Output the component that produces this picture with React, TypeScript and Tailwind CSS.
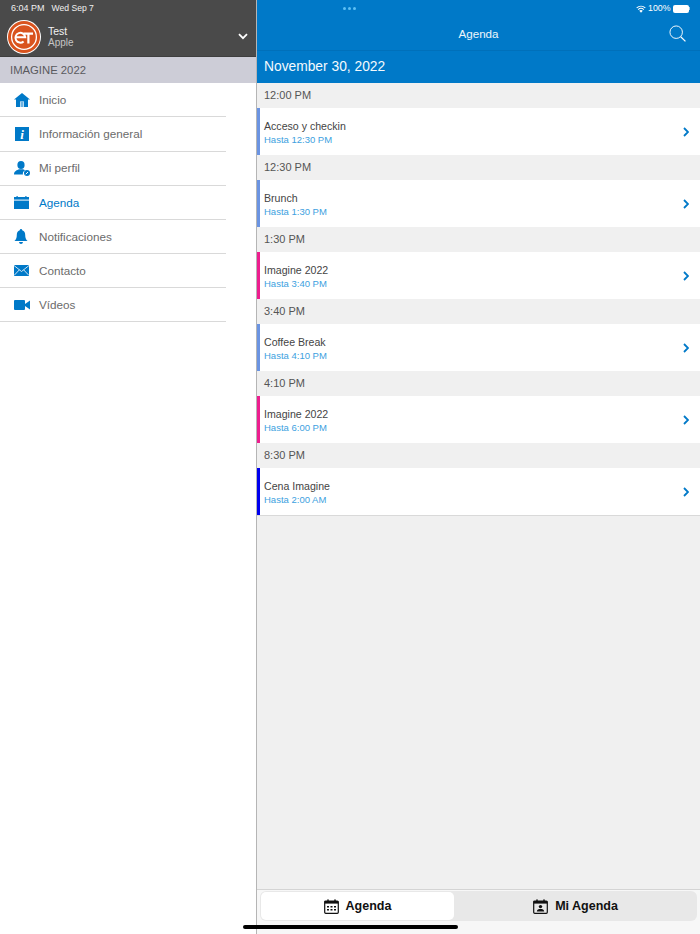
import React from 'react';

const font = "font-['Liberation_Sans',Arial,sans-serif]";

const HomeIcon = () => (
  <svg viewBox="0 0 16 14" className="w-[16px] h-[14px]">
    <path d="M8 0 L16 6.5 L14 6.5 L14 14 L10 14 L10 8.5 L6 8.5 L6 14 L2 14 L2 6.5 L0 6.5 Z" fill="#0079c8" />
    <rect x="6.5" y="9" width="3" height="5" fill="#6fb4e2" />
  </svg>
);

const InfoIcon = () => (
  <div className="w-[14px] h-[14px] ml-px bg-[#0079c8] flex items-center justify-center text-white text-[13px] font-bold italic leading-none font-['Liberation_Serif',serif]">
    i
  </div>
);

const ProfileIcon = () => (
  <svg viewBox="0 0 16 15" className="w-[16px] h-[15px]">
    <ellipse cx="7" cy="4" rx="3.6" ry="4" fill="#0079c8" />
    <path d="M0 13.5 C0 10 3 9 5.2 8.2 L8.8 8.2 C10 8.6 10.8 9 11 9.4 C9 10.4 8.6 12 9 13.5 Z" fill="#0079c8" />
    <circle cx="13" cy="12" r="3" fill="#0079c8" />
    <path d="M11.8 13.2 L14 11" stroke="#fff" strokeWidth="1" />
  </svg>
);

const CalendarIcon = () => (
  <svg viewBox="0 0 15 13" className="w-[15px] h-[13px]">
    <rect x="0" y="1" width="15" height="2.6" fill="#0079c8" />
    <rect x="0" y="4.6" width="15" height="8.4" fill="#0079c8" />
    <rect x="2.5" y="0" width="1.2" height="2" fill="#0079c8" />
    <rect x="11.3" y="0" width="1.2" height="2" fill="#0079c8" />
  </svg>
);

const BellIcon = () => (
  <svg viewBox="0 0 14 15" className="w-[14px] h-[15px]">
    <path d="M7 0 C7.8 0 8.2 .6 8.2 1.3 C10.4 2 11.2 3.8 11.2 6 C11.2 9 12 10.6 13.6 12 L.4 12 C2 10.6 2.8 9 2.8 6 C2.8 3.8 3.6 2 5.8 1.3 C5.8 .6 6.2 0 7 0 Z" fill="#0079c8" />
    <path d="M5 13 L9 13 C8.8 14.2 8 15 7 15 C6 15 5.2 14.2 5 13 Z" fill="#0079c8" />
  </svg>
);

const MailIcon = () => (
  <svg viewBox="0 0 15 11" className="w-[15px] h-[11px]">
    <rect width="15" height="11" fill="#0079c8" />
    <path d="M0 .5 L7.5 6.5 L15 .5 M0 10.5 L5.4 4.8 M15 10.5 L9.6 4.8" stroke="#fff" strokeWidth=".8" fill="none" />
  </svg>
);

const VideoIcon = () => (
  <svg viewBox="0 0 16 10" className="w-[16px] h-[10px]">
    <rect width="11" height="10" rx="1" fill="#0079c8" />
    <path d="M11 4 L16 0.5 L16 9.5 L11 6 Z" fill="#0079c8" />
  </svg>
);

const Logo = () => (
  <div className="w-[34px] h-[34px] rounded-full bg-white flex items-center justify-center shrink-0">
    <svg viewBox="0 0 32 32" className="w-[32px] h-[32px]">
      <circle cx="16" cy="16" r="16" fill="#d9531e" />
      <circle cx="16" cy="16" r="12.4" fill="none" stroke="#fff" strokeWidth="1.3" />
      <path d="M7.6 16.2 L17.2 16.2 A4.9 4.9 0 1 0 15.6 20.4" fill="none" stroke="#fff" strokeWidth="2" />
      <path d="M15.5 12.6 L25 12.6 M20.4 12.6 L20.4 22.6" fill="none" stroke="#fff" strokeWidth="2.2" />
    </svg>
  </div>
);

const MenuRow: React.FC<{ label: string; icon: React.ReactNode; active?: boolean }> = ({ label, icon, active }) => (
  <div className="h-[34.15px] w-[226px] border-b border-[#d9d9d9] flex items-center">
    <div className="w-[39px] pl-[14px] flex items-center shrink-0">{icon}</div>
    <span className={`text-[11.7px] ${active ? 'text-[#0079c8]' : 'text-[#6b6b6b]'}`}>{label}</span>
  </div>
);

const Sidebar = () => (
  <div className="w-[257px] shrink-0 border-r border-[#b5b5b5] bg-white flex flex-col">
    <div className="h-[57px] bg-[#4a4a4a] border-b border-[#3e3e3e] text-white flex flex-col">
      <div className="h-[18px] pl-[11px] pt-[3px] leading-[11px] text-[#f0f0f0] flex gap-[7px]">
        <span className="text-[9px]">6:04 PM</span>
        <span className="text-[8.6px]">Wed Sep 7</span>
      </div>
      <div className="flex items-center pl-[7px] pr-[7px] h-[37px]">
        <Logo />
        <div className="ml-[7px] flex-1 leading-none pt-[1px]">
          <div className="text-[10.5px] leading-[11px] text-[#f2f2f2]">Test</div>
          <div className="text-[10px] leading-[11px] text-[#c6c6c6]">Apple</div>
        </div>
        <svg viewBox="0 0 10 7" className="w-[10px] h-[7px] mr-[1px]">
          <path d="M1 1.2 L5 5.2 L9 1.2" fill="none" stroke="#fff" strokeWidth="1.8" />
        </svg>
      </div>
    </div>
    <div className="h-[26px] bg-[#cdcdd7] pl-[10px] flex items-center text-[11.3px] text-[#5a5a5e]">IMAGINE 2022</div>
    <div className="mt-[0.3px] flex flex-col">
      <MenuRow label="Inicio" icon={<HomeIcon />} />
      <MenuRow label="Información general" icon={<InfoIcon />} />
      <MenuRow label="Mi perfil" icon={<ProfileIcon />} />
      <MenuRow label="Agenda" icon={<CalendarIcon />} active />
      <MenuRow label="Notificaciones" icon={<BellIcon />} />
      <MenuRow label="Contacto" icon={<MailIcon />} />
      <MenuRow label="Vídeos" icon={<VideoIcon />} />
    </div>
  </div>
);

const TopBar = () => (
  <div className="bg-[#0079c8] text-white">
    <div className="h-[51px] border-b border-[#0070ba] flex flex-col">
      <div className="h-[17px] relative flex items-center justify-end pr-[10px] text-[8.8px]">
        <div className="absolute left-[86px] top-[7px] flex gap-[2px]">
          <div className="w-[3px] h-[3px] rounded-full bg-[#5ec0f5]" />
          <div className="w-[3px] h-[3px] rounded-full bg-[#5ec0f5]" />
          <div className="w-[3px] h-[3px] rounded-full bg-[#5ec0f5]" />
        </div>
        <svg viewBox="0 0 12 9" className="w-[10px] h-[8px] mr-[2px]">
          <path d="M6 9 L3.9 6.6 C5.1 5.5 6.9 5.5 8.1 6.6 Z" fill="#fff" />
          <path d="M2.6 5.2 C4.6 3.4 7.4 3.4 9.4 5.2 M.8 3.1 C3.8 .5 8.2 .5 11.2 3.1" fill="none" stroke="#fff" strokeWidth="1.3" />
        </svg>
        <span className="mr-[2px]">100%</span>
        <div className="w-[16px] h-[8px] rounded-[2px] bg-white" />
        <div className="w-[1px] h-[3px] bg-[#9cc9e8] ml-[0.5px]" />
      </div>
      <div className="flex-1 relative flex items-center justify-center text-[11.6px]">
        <span className="text-[#eef6fb]">Agenda</span>
        <svg viewBox="0 0 18 18" className="absolute right-[14px] top-[8px] w-[17px] h-[17px]">
          <circle cx="7.6" cy="7.6" r="6.6" fill="none" stroke="#fff" strokeWidth="1" />
          <path d="M12.4 12.4 L17.4 17.4" stroke="#fff" strokeWidth="1.3" />
        </svg>
      </div>
    </div>
    <div className="h-[32px] pl-[7px] pt-px flex items-center text-[13.8px] text-[#f4f9fd]">November 30, 2022</div>
  </div>
);

const AgendaItem: React.FC<{ time: string; title: string; until: string; color: string; last?: boolean }> = ({ time, title, until, color, last }) => (
  <div>
    <div className="h-[25px] pl-[7px] pb-[1px] flex items-center text-[11px] text-[#555555]">{time}</div>
    <div className={`bg-white flex items-stretch ${last ? 'h-[48px] border-b border-[#d9d9d9]' : 'h-[47px]'}`}>
      <div className={`w-[3px] shrink-0 ${color}`} />
      <div className="flex-1 pl-[4px] pt-[1px] flex flex-col justify-center">
        <div className="text-[10.6px] leading-[14px] text-[#444444]">{title}</div>
        <div className="text-[9.5px] leading-[13px] text-[#3d9fe0]">{until}</div>
      </div>
      <div className="w-[17px] shrink-0 flex items-center">
        <svg viewBox="0 0 6 10" className="w-[6px] h-[10px]">
          <path d="M1 1 L5 5 L1 9" fill="none" stroke="#0079c8" strokeWidth="1.8" />
        </svg>
      </div>
    </div>
  </div>
);

const TabCalendarIcon: React.FC<{ person?: boolean }> = ({ person }) => (
  <svg viewBox="0 0 15 15" className="w-[15px] h-[15px]">
    <rect x="0.7" y="2" width="13.6" height="12.3" rx="1" fill="none" stroke="#111" strokeWidth="1.2" />
    <rect x="0.7" y="2" width="13.6" height="2.6" fill="#111" />
    <rect x="3.3" y="0.4" width="1.4" height="2.8" fill="#111" />
    <rect x="10.3" y="0.4" width="1.4" height="2.8" fill="#111" />
    {person ? (
      <>
        <circle cx="7.5" cy="7.6" r="1.7" fill="#111" />
        <path d="M3.8 12.6 C4 10.4 5.6 10 7.5 10 C9.4 10 11 10.4 11.2 12.6 Z" fill="#111" />
      </>
    ) : (
      <path d="M3 7 h2 v1.4 h-2 Z M6.5 7 h2 v1.4 h-2 Z M10 7 h2 v1.4 h-2 Z M3 10 h2 v1.4 h-2 Z M6.5 10 h2 v1.4 h-2 Z M10 10 h2 v1.4 h-2 Z" fill="#111" />
    )}
  </svg>
);

const BottomTabs = () => (
  <div className="relative h-[45px] bg-[#f7f7f7] border-t border-[#d4d4d4] px-[3px] pt-[1px]">
    <div className="h-[30px] bg-[#e8e8e8] rounded-[6px] flex">
      <div className="w-[193px] ml-px h-[28px] mt-px bg-white rounded-[5px] flex items-center justify-center gap-[7px] pt-px text-[12.5px] font-bold text-[#111]">
        <TabCalendarIcon />
        <span>Agenda</span>
      </div>
      <div className="flex-1 flex items-center justify-center gap-[7px] pt-px text-[12.5px] font-bold text-[#111]">
        <TabCalendarIcon person />
        <span>Mi Agenda</span>
      </div>
    </div>
    <div className="absolute left-[-14px] top-[35px] w-[215px] h-[4px] rounded-full bg-black" />
  </div>
);

const items = [
  { time: '12:00 PM', title: 'Acceso y checkin', until: 'Hasta 12:30 PM', color: 'bg-[#6b94e2]' },
  { time: '12:30 PM', title: 'Brunch', until: 'Hasta 1:30 PM', color: 'bg-[#6b94e2]' },
  { time: '1:30 PM', title: 'Imagine 2022', until: 'Hasta 3:40 PM', color: 'bg-[#ed1e8f]' },
  { time: '3:40 PM', title: 'Coffee Break', until: 'Hasta 4:10 PM', color: 'bg-[#6b94e2]' },
  { time: '4:10 PM', title: 'Imagine 2022', until: 'Hasta 6:00 PM', color: 'bg-[#ed1e8f]' },
  { time: '8:30 PM', title: 'Cena Imagine', until: 'Hasta 2:00 AM', color: 'bg-[#0000ee]' },
];

export default function App() {
  return (
    <div className={`w-[700px] h-[934px] flex overflow-hidden ${font}`}>
      <Sidebar />
      <div className="flex-1 flex flex-col bg-[#f0f0f0] min-w-0">
        <TopBar />
        <div className="flex-1">
          {items.map((item, i) => (
            <AgendaItem key={i} {...item} last={i === items.length - 1} />
          ))}
        </div>
        <BottomTabs />
      </div>
    </div>
  );
}
